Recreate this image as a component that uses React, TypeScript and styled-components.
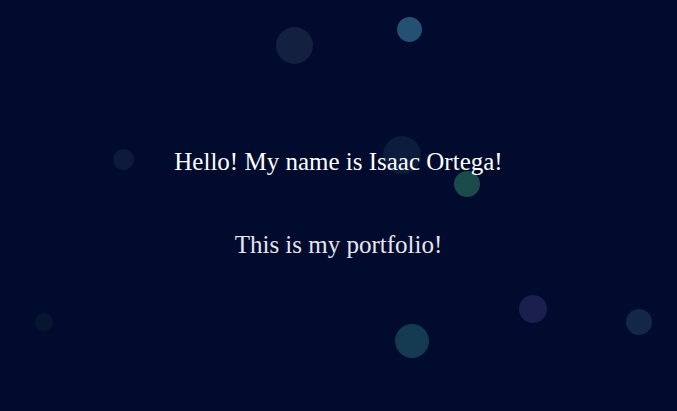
import React from "react";
import styled, { createGlobalStyle } from "styled-components";

const GlobalStyle = createGlobalStyle`
  html, body {
    margin: 0;
    padding: 0;
    background: #000b2e;
  }
  #root {
    min-height: 100vh;
  }
`;

const Page = styled.main`
  position: relative;
  width: 100%;
  height: 411px;
  overflow: hidden;
  background: #000b2e;
  display: flex;
  flex-direction: column;
  align-items: center;
  padding-top: 145px;
  box-sizing: border-box;
  gap: 49px;
`;

const Line = styled.h1<{ $tone: string }>`
  position: relative;
  z-index: 1;
  margin: 0;
  font-family: "Liberation Serif", "DejaVu Serif", serif;
  font-weight: 400;
  font-size: 25px;
  line-height: 34px;
  color: ${(p) => p.$tone};
  text-align: center;
`;

const Bubble = styled.span<{ $x: number; $y: number; $r: number; $c: string }>`
  position: absolute;
  left: ${(p) => p.$x - p.$r}px;
  top: ${(p) => p.$y - p.$r}px;
  width: ${(p) => p.$r * 2}px;
  height: ${(p) => p.$r * 2}px;
  border-radius: 50%;
  background: ${(p) => p.$c};
  z-index: 0;
`;

const bubbles = [
  { x: 294, y: 45, r: 18.5, c: "#13203f" },
  { x: 409, y: 29, r: 12.5, c: "#245172" },
  { x: 402, y: 155, r: 19, c: "#0b1c3c" },
  { x: 467, y: 184, r: 13, c: "#1a4b4a" },
  { x: 123, y: 159, r: 10.5, c: "#0e1a3b" },
  { x: 44, y: 322, r: 9, c: "#06162f" },
  { x: 412, y: 341, r: 17, c: "#143b50" },
  { x: 533, y: 309, r: 14, c: "#1a1f4e" },
  { x: 639, y: 322, r: 13, c: "#132848" },
];

export default function App() {
  return (
    <>
      <GlobalStyle />
      <Page>
        {bubbles.map((b, i) => (
          <Bubble key={i} $x={b.x} $y={b.y} $r={b.r} $c={b.c} />
        ))}
        <Line $tone="#ffffff">Hello! My name is Isaac Ortega!</Line>
        <Line $tone="#e6e6ee">This is my portfolio!</Line>
      </Page>
    </>
  );
}
